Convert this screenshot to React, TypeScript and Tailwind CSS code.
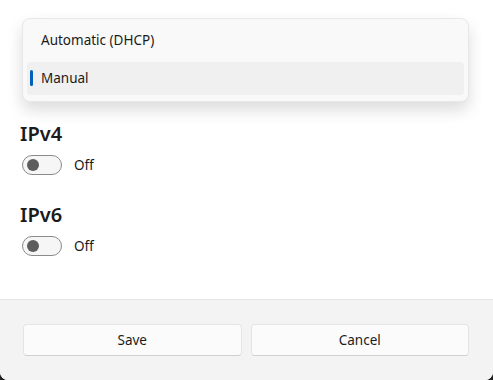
import React from 'react';

const FONT = { fontFamily: '"Segoe UI", "Noto Sans", "Open Sans", sans-serif' };

function ToggleRow({ label }: { label: string }) {
  return (
    <div className="flex items-center gap-3 pl-[2px]">
      <div className="flex h-[20px] w-[40px] items-center rounded-full border border-[#8a8a8a] bg-[#f6f6f6] pl-[4px]">
        <div className="h-[12px] w-[12px] rounded-full bg-[#5d5d5d]" />
      </div>
      <span className="text-[13.5px] text-[#1b1b1b]">{label}</span>
    </div>
  );
}

function Section({ title }: { title: string }) {
  return (
    <div className="flex flex-col gap-[7px]">
      <h2 className="text-[20px] font-semibold leading-[28px] text-[#1b1b1b]">{title}</h2>
      <ToggleRow label="Off" />
    </div>
  );
}

export default function App() {
  const options = ['Automatic (DHCP)', 'Manual'];
  const selected = 'Manual';

  return (
    <div className="relative flex h-[380px] w-[493px] flex-col overflow-hidden bg-[#202020]" style={FONT}>
      <div className="flex flex-1 flex-col rounded-b-[8px] bg-white">
        <div className="flex flex-1 flex-col gap-[26px] px-[20px] pt-[120px]">
          <Section title="IPv4" />
          <Section title="IPv6" />
        </div>

        <div className="flex h-[81px] gap-[9px] rounded-b-[8px] border-t border-[#e5e5e5] bg-[#f3f3f3] pl-[23px] pr-[24px] pt-[24px]">
          <button className="h-[32px] flex-1 rounded-[4px] border border-[#e5e5e5] border-b-[#d0d0d0] bg-[#fbfbfb] text-[13.5px] text-[#1b1b1b]">
            Save
          </button>
          <button className="h-[32px] flex-1 rounded-[4px] border border-[#e5e5e5] border-b-[#d0d0d0] bg-[#fbfbfb] text-[13.5px] text-[#1b1b1b]">
            Cancel
          </button>
        </div>
      </div>

      {/* open combobox list */}
      <div className="absolute left-[22px] top-[18px] flex w-[447px] flex-col gap-[3px] rounded-[8px] border border-[#e8e8e8] bg-[#f9f9f9] px-[4px] py-[6px] shadow-[0_8px_16px_rgba(0,0,0,0.14)]">
        {options.map((option) => (
          <div
            key={option}
            className={
              option === selected
                ? 'relative flex h-[33px] items-center rounded-[4px] bg-[#f0f0f0] pl-[14px] text-[13.5px] text-[#1b1b1b]'
                : 'relative flex h-[34px] items-center rounded-[4px] pb-[4px] pl-[14px] text-[13.5px] text-[#1b1b1b]'
            }
          >
            {option === selected && (
              <span className="absolute left-[3px] top-[8px] h-[16px] w-[3px] rounded-full bg-[#005fb8]" />
            )}
            {option}
          </div>
        ))}
      </div>
    </div>
  );
}
